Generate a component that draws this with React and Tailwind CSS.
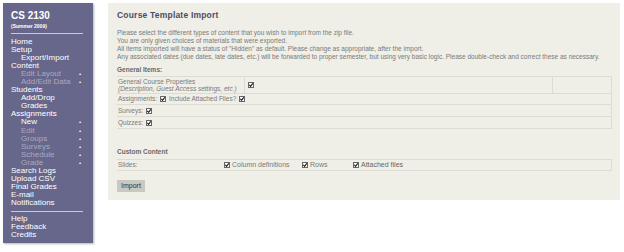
import React from "react";

const font = { fontFamily: '"Liberation Sans", Arial, sans-serif' };

function Box() {
  return (
    <span className="inline-flex items-center justify-center w-[6px] h-[6px] bg-white border border-[#666] align-middle">
      <svg width="4" height="4" viewBox="0 0 4 4">
        <path d="M0.3 1.8 L1.6 3.3 L3.8 0.4" stroke="#111" strokeWidth="1.1" fill="none" />
      </svg>
    </span>
  );
}

const menu = [
  { t: "Home" },
  { t: "Setup" },
  { t: "Export/Import", sub: true },
  { t: "Content" },
  { t: "Edit Layout", sub: true, dim: true, dot: true },
  { t: "Add/Edit Data", sub: true, dim: true, dot: true },
  { t: "Students" },
  { t: "Add/Drop", sub: true },
  { t: "Grades", sub: true },
  { t: "Assignments" },
  { t: "New", sub: true, dot: true },
  { t: "Edit", sub: true, dim: true, dot: true },
  { t: "Groups", sub: true, dim: true, dot: true },
  { t: "Surveys", sub: true, dim: true, dot: true },
  { t: "Schedule", sub: true, dim: true, dot: true },
  { t: "Grade", sub: true, dim: true, dot: true },
  { t: "Search Logs" },
  { t: "Upload CSV" },
  { t: "Final Grades" },
  { t: "E-mail" },
  { t: "Notifications" },
];

function Sidebar() {
  return (
    <div className="w-[90px] h-[240px] bg-[#67678b] shadow-[1px_1px_2px_rgba(0,0,0,0.3)] px-[8px] pt-[7px] text-white shrink-0">
      <div className="text-[10px] font-bold leading-[11px]">CS 2130</div>
      <div className="text-[5px] font-bold leading-[6px] mt-[2px]">(Summer 2009)</div>
      <div className="h-px bg-[#c8c8d8] mt-[4px] mb-[4px] mr-[2px]" />
      <div className="text-[8px] leading-[8.05px]">
        {menu.map((m) => (
          <div
            key={m.t}
            className={
              "flex justify-between " +
              (m.sub ? "pl-[10px] " : "") +
              (m.dim ? "text-[#a9a9c2]" : "text-white")
            }
          >
            <span>{m.t}</span>
            {m.dot && <span className="text-white pr-[4px] text-[6px]">•</span>}
          </div>
        ))}
      </div>
      <div className="h-px bg-[#c8c8d8] mt-[4px] mb-[3px] mr-[2px]" />
      <div className="text-[8px] leading-[8.05px]">
        <div>Help</div>
        <div>Feedback</div>
        <div>Credits</div>
      </div>
    </div>
  );
}

function Row({ children, className = "" }) {
  return <div className={"border-b border-[#dddcd2] flex items-center " + className}>{children}</div>;
}

function Main() {
  return (
    <div className="ml-[15px] w-[512px] h-[197px] bg-[#efeee7] pl-[9px] pr-[8px] pt-[7px] text-[#7a7a7a] text-[6.5px]">
      <div className="text-[8.5px] font-bold text-[#4c4c66] tracking-[0.2px] leading-[10px]">Course Template Import</div>
      <div className="mt-[9px] leading-[8px]">
        <div>Please select the different types of content that you wish to import from the zip file.</div>
        <div>You are only given choices of materials that were exported.</div>
        <div>All items imported will have a status of "Hidden" as default. Please change as appropriate, after the import.</div>
        <div>Any associated dates (due dates, late dates, etc.) will be forwarded to proper semester, but using very basic logic. Please double-check and correct these as necessary.</div>
      </div>
      <div className="mt-[5px] font-bold text-[#6a6a6a] leading-[8px]">General Items:</div>
      <div className="mt-[2px] border-t border-r border-[#dddcd2]">
        <Row className="h-[17px] items-stretch">
          <div className="w-[128px] border-r border-[#dddcd2] pl-[1px] flex flex-col justify-center leading-[7.5px]">
            <div>General Course Properties</div>
            <div className="italic">(Description, Guest Access settings, etc.)</div>
          </div>
          <div className="flex-1 border-r border-[#dddcd2] flex items-center pl-[3px]">
            <Box />
          </div>
          <div className="w-[58px]" />
        </Row>
        <Row className="h-[11px] pl-[1px] gap-[3px]">
          <span>Assignments:</span>
          <Box />
          <span>Include Attached Files?</span>
          <Box />
        </Row>
        <Row className="h-[12px] pl-[1px] gap-[3px]">
          <span>Surveys:</span>
          <Box />
        </Row>
        <Row className="h-[12px] pl-[1px] gap-[3px]">
          <span>Quizzes:</span>
          <Box />
        </Row>
      </div>
      <div className="mt-[19px] font-bold text-[#6a6a6a] leading-[8px]">Custom Content</div>
      <div className="mt-[3px] border-t border-r border-[#dddcd2]">
        <Row className="h-[11px] pl-[1px]">
          <span className="w-[106px]">Slides:</span>
          <span className="w-[78px] flex items-center gap-[2px] text-[7px]"><Box />Column definitions</span>
          <span className="w-[51px] flex items-center gap-[2px] text-[7px]"><Box />Rows</span>
          <span className="flex items-center gap-[2px] text-[7px] text-[#666]"><Box />Attached files</span>
        </Row>
      </div>
      <button className="mt-[9px] h-[12px] px-[4px] bg-[#c9c9c1] text-[#333] text-[7px] leading-[12px]">Import</button>
    </div>
  );
}

export default function App() {
  return (
    <div className="w-[624px] h-[252px] bg-white flex items-start pt-[3px] pl-[3px]" style={font}>
      <Sidebar />
      <Main />
    </div>
  );
}
